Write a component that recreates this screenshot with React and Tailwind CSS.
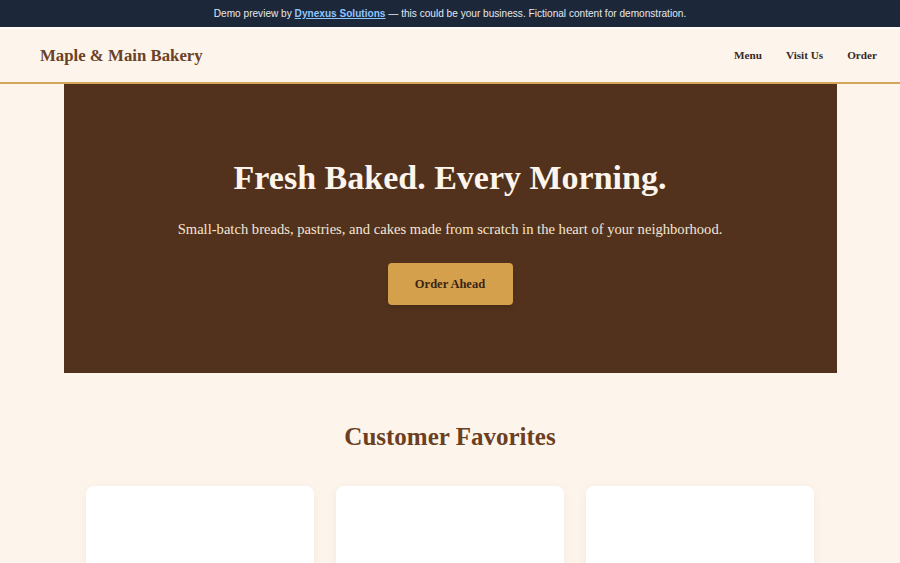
export default function App() {
  const serif = { fontFamily: '"Liberation Serif", "Times New Roman", serif' };

  return (
    <div className="min-h-screen bg-[#fdf5ec]" style={serif}>
      {/* Demo banner */}
      <div
        className="h-[27px] bg-[#1c2739] flex items-center justify-center text-[10.1px] text-[#e5e7eb]"
        style={{ fontFamily: '"Liberation Sans", Arial, sans-serif' }}
      >
        <span>
          Demo preview by{' '}
          <a href="#" className="font-bold text-[#8ec5ff] underline">
            Dynexus Solutions
          </a>{' '}
          — this could be your business. Fictional content for demonstration.
        </span>
      </div>

      {/* Header */}
      <header className="h-[57px] border-t-2 border-t-white/60 border-b-2 border-b-[#d4a55a] bg-[#fdf5ec] flex items-center justify-between pl-10 pr-[23px]">
        <div className="text-[16.8px] font-bold text-[#6b4226]">Maple &amp; Main Bakery</div>
        <nav className="flex items-center gap-[24px] text-[11.2px] font-bold text-[#3a2a1f]">
          <a href="#">Menu</a>
          <a href="#">Visit Us</a>
          <a href="#">Order</a>
        </nav>
      </header>

      {/* Hero */}
      <section className="max-w-[773px] mx-auto h-[289px] bg-[#52321c] flex flex-col items-center pt-[74px]">
        <h1 className="text-[34px] leading-[40px] font-bold text-[#fdf5ec]">
          Fresh Baked. Every Morning.
        </h1>
        <p className="mt-[21px] text-[14.6px] leading-[20px] text-[#f3e6d6]">
          Small-batch breads, pastries, and cakes made from scratch in the heart of your neighborhood.
        </p>
        <button className="mt-[24px] w-[125px] h-[42px] rounded-[4px] bg-[#d4a04c] text-[12.5px] font-bold text-[#3a2414] shadow-md">
          Order Ahead
        </button>
      </section>

      {/* Favorites */}
      <section className="pt-[48px]">
        <h2 className="text-center text-[25px] leading-[32px] font-bold text-[#6b3f1f]">
          Customer Favorites
        </h2>
        <div className="max-w-[728px] mx-auto mt-[33px] grid grid-cols-3 gap-[22px]">
          {[0, 1, 2].map((i) => (
            <div key={i} className="h-[160px] bg-white rounded-lg shadow-[0_2px_8px_rgba(120,80,40,0.08)]" />
          ))}
        </div>
      </section>
    </div>
  );
}
